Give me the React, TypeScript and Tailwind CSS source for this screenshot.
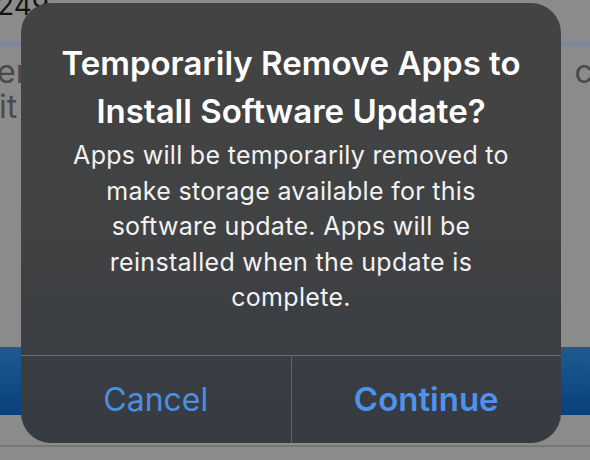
export default function App() {
  return (
    <div className="relative h-[460px] w-[590px] overflow-hidden bg-[#8b8b8b] font-['Inter','Liberation_Sans',sans-serif]">
      {/* dimmed page behind the alert */}
      <div className="flex h-full flex-col">
        <div className="h-[41px]">
          <div className="-ml-[3px] -mt-[8px] text-[28px] leading-[27px] text-[#141414]">249</div>
        </div>
        <div className="h-[5px] bg-[#7b879b]" />
        <div className="mt-[8px] flex justify-between text-[32px] leading-[35px] text-[#4a4a4a]">
          <div className="-ml-[3px] flex flex-col">
            <span>ern</span>
            <span className="pl-[2px]">it</span>
          </div>
          <span className="-mr-[21px]">ca</span>
        </div>
        <div className="mt-[223px] h-[68px] bg-gradient-to-b from-[#1f5b93] to-[#083f7c]" />
        <div className="mt-[30px] h-[2px] bg-[#777777]" />
      </div>

      {/* alert */}
      <div className="absolute left-[21px] top-[3px] flex h-[440px] w-[540px] flex-col overflow-hidden rounded-[30px] bg-gradient-to-b from-[#434343] via-[#414243] to-[#363b42]">
        <div className="flex h-[352px] flex-col items-center pt-[36px] text-center">
          <h1 className="text-[33px] font-semibold leading-[48px] text-white">
            Temporarily Remove Apps to
            <br />
            Install Software Update?
          </h1>
          <p className="mt-[3px] text-[25px] leading-[35.5px] tracking-[0.3px] text-[#f2f2f2]">
            Apps will be temporarily removed to
            <br />
            make storage available for this
            <br />
            software update. Apps will be
            <br />
            reinstalled when the update is
            <br />
            complete.
          </p>
        </div>
        <div className="flex flex-1 border-t border-[#686d74]">
          <button className="flex-1 text-[32px] text-[#4a8fe2]">Cancel</button>
          <div className="w-px bg-[#5d636b]" />
          <button className="flex-1 text-[33px] font-semibold text-[#4d93ee]">Continue</button>
        </div>
      </div>
    </div>
  )
}
